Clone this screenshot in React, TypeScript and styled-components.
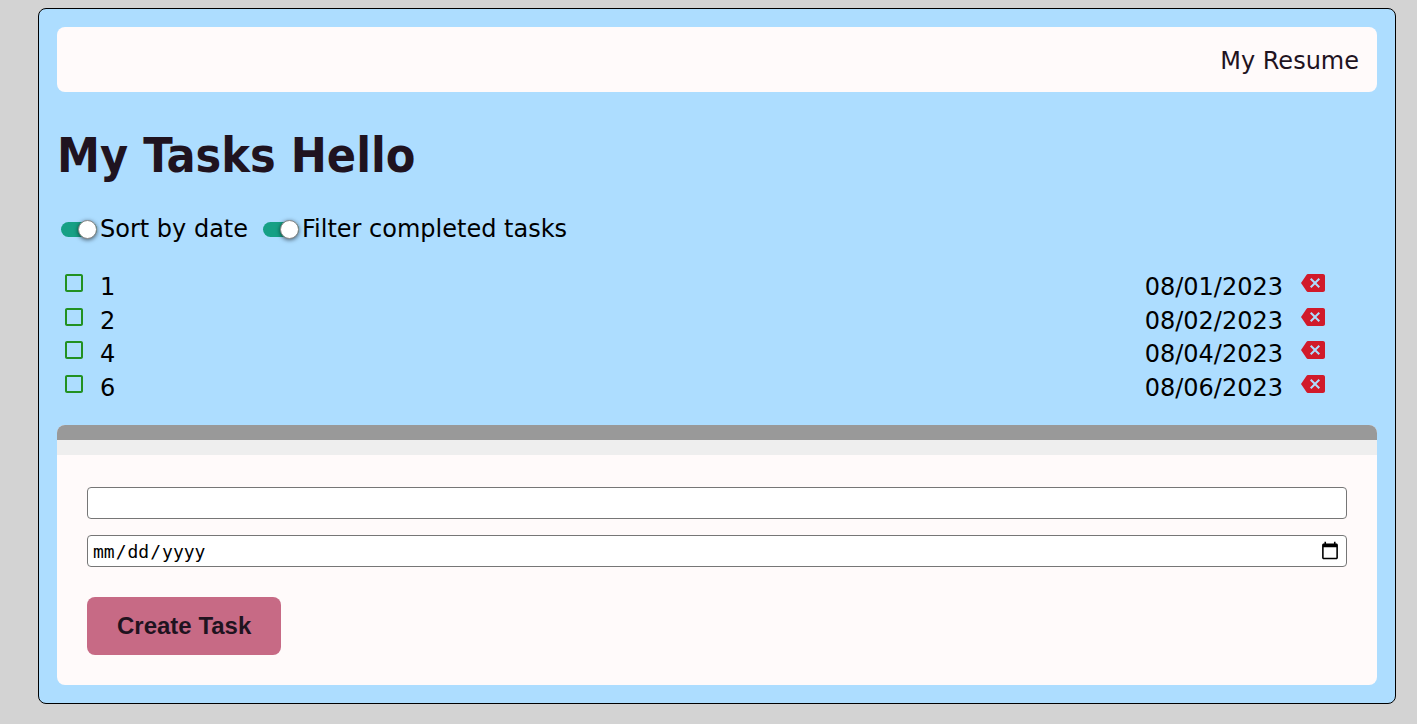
import { useState } from 'react';
import styled, { createGlobalStyle } from 'styled-components';
import { MdBackspace, MdCheckBox, MdCheckBoxOutlineBlank } from 'react-icons/md';

const GlobalStyle = createGlobalStyle`
  *, *::before, *::after { box-sizing: border-box; }
  body {
    margin: 0;
    background: #d3d3d3;
    color: #000;
    font-family: Verdana, "DejaVu Sans", sans-serif;
    font-size: 24px;
    line-height: 32px;
  }
`;

const Frame = styled.main`
  margin: 8px 21px 20px 38px;
  padding: 18px;
  background: #adddff;
  border: 1px solid #000;
  border-radius: 8px;
`;

const NavBar = styled.nav`
  display: flex;
  justify-content: flex-end;
  padding: 18px 18px 15px;
  background: #fffafa;
  border-radius: 8px;
`;

const NavLink = styled.a`
  color: #1f131f;
  text-decoration: none;
`;

const Title = styled.h1`
  margin: 33px 0 31px;
  color: #1f131f;
  font-family: Tahoma, "DejaVu Sans Condensed", sans-serif;
  font-size: 48px;
  font-weight: 700;
  line-height: 60px;
`;

const Toggles = styled.div`
  display: flex;
  flex-wrap: wrap;
  gap: 15px;
  padding-left: 4px;
  line-height: 27px;
`;

const ToggleLabel = styled.label`
  display: flex;
  align-items: center;
  gap: 3px;
`;

const Switch = styled.input`
  appearance: none;
  display: flex;
  align-items: center;
  flex: none;
  width: 36px;
  height: 15px;
  margin: 0;
  border-radius: 8px;
  background: ${(p) => (p.checked ? '#16a085' : '#999')};
  cursor: pointer;

  &::before {
    content: '';
    width: 19px;
    height: 19px;
    margin-left: ${(p) => (p.checked ? '17px' : '0')};
    flex: none;
    border: 1px solid #888;
    border-radius: 50%;
    background: #fff;
    box-shadow: 0 1px 4px rgba(0, 0, 0, 0.6);
  }
`;

const TaskList = styled.ul`
  display: grid;
  grid-auto-rows: 1fr;
  min-height: 134px;
  margin: 28px 0 20px;
  padding: 0 52px 0 5px;
  list-style: none;
`;

const TaskRow = styled.li`
  display: flex;
  align-items: flex-start;
`;

const TaskLabel = styled.label`
  display: flex;
  flex: 1;
  gap: 14px;
  cursor: pointer;

  svg {
    color: #229122;
  }
`;

const HiddenCheck = styled.input`
  appearance: none;
  position: absolute;
  width: 24px;
  height: 24px;
  margin: 0;
`;

const DueDate = styled.time`
  margin-right: 18px;
`;

const DeleteButton = styled.button`
  display: flex;
  padding: 0;
  border: 0;
  background: none;
  color: #d11a2a;
  cursor: pointer;
`;

const FormCard = styled.form`
  overflow: hidden;
  background: #fffafa;
  border-radius: 8px;
`;

const Strip = styled.div<{ $color: string }>`
  height: 15px;
  background: ${(p) => p.$color};
`;

const FormBody = styled.div`
  display: flex;
  flex-direction: column;
  align-items: flex-start;
  gap: 16px;
  padding: 32px 30px 30px;
`;

const Field = styled.input`
  width: 100%;
  height: 32px;
  padding: 0 4px;
  border: 1px solid #767676;
  border-radius: 4px;
  background: #fff;
  color: #000;
  font-family: Consolas, "DejaVu Sans Mono", monospace;
  font-size: 18px;

  &::-webkit-calendar-picker-indicator {
    width: 20px;
    height: 20px;
  }
`;

const SubmitButton = styled.button`
  height: 58px;
  margin-top: 14px;
  padding: 0 30px;
  border: 0;
  border-radius: 8px;
  background: #c76a85;
  color: #1f131f;
  font-family: Arial, "Liberation Sans", sans-serif;
  font-size: 24px;
  font-weight: 700;
  cursor: pointer;
`;

type Task = { name: string; due: string; done: boolean };

const initialTasks: Task[] = [
  { name: '1', due: '08/01/2023', done: false },
  { name: '2', due: '08/02/2023', done: false },
  { name: '4', due: '08/04/2023', done: false },
  { name: '6', due: '08/06/2023', done: false },
];

export default function App() {
  const [tasks, setTasks] = useState(initialTasks);
  const [sorted, setSorted] = useState(true);
  const [filtered, setFiltered] = useState(true);

  const toggle = (name: string) =>
    setTasks(tasks.map((t) => (t.name === name ? { ...t, done: !t.done } : t)));
  const remove = (name: string) => setTasks(tasks.filter((t) => t.name !== name));

  return (
    <>
      <GlobalStyle />
      <Frame>
        <NavBar>
          <NavLink href="#resume">My Resume</NavLink>
        </NavBar>
        <Title>My Tasks Hello</Title>
        <Toggles>
          <ToggleLabel>
            <Switch type="checkbox" role="switch" checked={sorted} onChange={() => setSorted(!sorted)} />
            Sort by date
          </ToggleLabel>
          <ToggleLabel>
            <Switch type="checkbox" role="switch" checked={filtered} onChange={() => setFiltered(!filtered)} />
            Filter completed tasks
          </ToggleLabel>
        </Toggles>
        <TaskList>
          {tasks.map((task) => (
            <TaskRow key={task.name}>
              <TaskLabel>
                <HiddenCheck type="checkbox" checked={task.done} onChange={() => toggle(task.name)} />
                {task.done ? <MdCheckBox size={24} /> : <MdCheckBoxOutlineBlank size={24} />}
                {task.name}
              </TaskLabel>
              <DueDate>{task.due}</DueDate>
              <DeleteButton type="button" aria-label={`Delete task ${task.name}`} onClick={() => remove(task.name)}>
                <MdBackspace size={24} />
              </DeleteButton>
            </TaskRow>
          ))}
        </TaskList>
        <FormCard onSubmit={(e) => e.preventDefault()}>
          <Strip $color="#999" />
          <Strip $color="#eee" />
          <FormBody>
            <Field type="text" aria-label="Task name" />
            <Field type="date" aria-label="Due date" />
            <SubmitButton type="submit">Create Task</SubmitButton>
          </FormBody>
        </FormCard>
      </Frame>
    </>
  );
}
